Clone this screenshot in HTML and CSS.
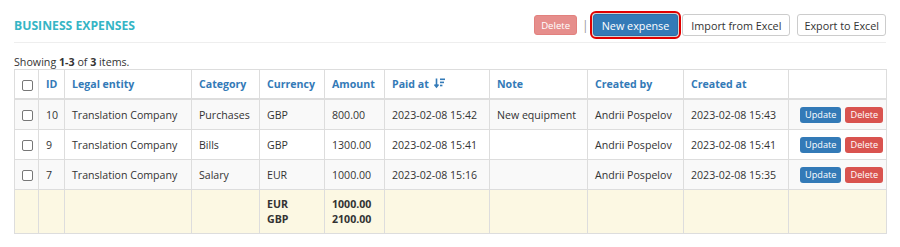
FILE: index.html
```html
<!DOCTYPE html>
<html lang="en">
<head>
    <meta charset="UTF-8">
    <title>Business expenses</title>
    <link rel="stylesheet" href="styles.css">
</head>
<body>
    <div class="page">
        <div class="page-header">
            <h1 class="page-title">BUSINESS EXPENSES</h1>
            <div class="toolbar">
                <button class="btn btn-danger btn-disabled">Delete</button>
                <span class="sep">|</span>
                <button class="btn btn-primary btn-highlight">New expense</button>
                <button class="btn btn-default btn-wide">Import from Excel</button>
                <button class="btn btn-default btn-last">Export to Excel</button>
            </div>
        </div>

        <div class="summary">Showing <b>1-3</b> of <b>3</b> items.</div>

        <table class="grid">
            <colgroup>
                <col class="col-check">
                <col class="col-id">
                <col class="col-entity">
                <col class="col-cat">
                <col class="col-cur">
                <col class="col-amount">
                <col class="col-paid">
                <col class="col-note">
                <col class="col-by">
                <col class="col-at">
                <col class="col-actions">
            </colgroup>
            <thead>
                <tr>
                    <th><span class="checkbox"></span></th>
                    <th><a>ID</a></th>
                    <th><a>Legal entity</a></th>
                    <th><a>Category</a></th>
                    <th><a>Currency</a></th>
                    <th><a>Amount</a></th>
                    <th><a>Paid at
                        <svg class="sort-icon" width="11" height="11" viewBox="0 0 11 11">
                            <path d="M2.5 0.5v8M0.5 6.5l2 2.5 2-2.5" stroke="#337ab7" stroke-width="1.6" fill="none"/>
                            <rect x="6" y="0.5" width="5" height="1.6" fill="#337ab7"/>
                            <rect x="6" y="3.6" width="4" height="1.6" fill="#337ab7"/>
                            <rect x="6" y="6.7" width="2.4" height="1.6" fill="#337ab7"/>
                        </svg></a></th>
                    <th><a>Note</a></th>
                    <th><a>Created by</a></th>
                    <th><a>Created at</a></th>
                    <th></th>
                </tr>
            </thead>
            <tbody>
                <tr>
                    <td><span class="checkbox"></span></td>
                    <td>10</td>
                    <td>Translation Company</td>
                    <td>Purchases</td>
                    <td>GBP</td>
                    <td>800.00</td>
                    <td>2023-02-08 15:42</td>
                    <td>New equipment</td>
                    <td>Andrii Pospelov</td>
                    <td>2023-02-08 15:43</td>
                    <td class="actions"><button class="btn-xs btn-primary">Update</button><button class="btn-xs btn-danger">Delete</button></td>
                </tr>
                <tr>
                    <td><span class="checkbox"></span></td>
                    <td>9</td>
                    <td>Translation Company</td>
                    <td>Bills</td>
                    <td>GBP</td>
                    <td>1300.00</td>
                    <td>2023-02-08 15:41</td>
                    <td></td>
                    <td>Andrii Pospelov</td>
                    <td>2023-02-08 15:41</td>
                    <td class="actions"><button class="btn-xs btn-primary">Update</button><button class="btn-xs btn-danger">Delete</button></td>
                </tr>
                <tr>
                    <td><span class="checkbox"></span></td>
                    <td>7</td>
                    <td>Translation Company</td>
                    <td>Salary</td>
                    <td>EUR</td>
                    <td>1000.00</td>
                    <td>2023-02-08 15:16</td>
                    <td></td>
                    <td>Andrii Pospelov</td>
                    <td>2023-02-08 15:35</td>
                    <td class="actions"><button class="btn-xs btn-primary">Update</button><button class="btn-xs btn-danger">Delete</button></td>
                </tr>
            </tbody>
            <tfoot>
                <tr>
                    <td></td>
                    <td></td>
                    <td></td>
                    <td></td>
                    <td><b>EUR<br>GBP</b></td>
                    <td><b>1000.00<br>2100.00</b></td>
                    <td></td>
                    <td></td>
                    <td></td>
                    <td></td>
                    <td></td>
                </tr>
            </tfoot>
        </table>
    </div>
</body>
</html>
```

FILE: styles.css
```css
/* Global */
body {
    margin: 0;
    font-family: 'Open Sans', sans-serif;
    font-size: 10.6px;
    color: #333;
    background: #fff;
}
.page {
    padding: 0 14px;
}

/* Header */
.page-header {
    display: flex;
    justify-content: space-between;
    align-items: center;
    height: 43px;
    border-bottom: 1px solid #eee;
    box-sizing: border-box;
    padding-top: 8px;
}
.page-title {
    margin: 0;
    font-size: 12.2px;
    font-weight: 700;
    color: #35b5c5;
}
.toolbar {
    display: flex;
    align-items: center;
    gap: 4px;
}
.sep {
    color: #999;
    margin: 0 0 0 1px;
    font-size: 12px;
}

/* Buttons */
.btn {
    font-family: 'Open Sans', sans-serif;
    font-size: 10.8px;
    border-radius: 3px;
    border: 1px solid transparent;
    line-height: 15px;
    height: 22px;
    padding: 2px 6px;
    white-space: nowrap;
    cursor: pointer;
}
.btn-default {
    background: #fff;
    border-color: #ccc;
    color: #333;
}
.btn-wide {
    padding: 2px 8px;
}
.btn-last {
    margin-left: 3px;
}
.btn-primary {
    background: #337ab7;
    border-color: #2e6da4;
    color: #fff;
}
.btn-danger {
    background: #d9534f;
    border-color: #d43f3a;
    color: #fff;
}
.btn-disabled {
    opacity: 0.65;
    height: 20px;
    font-size: 9.6px;
    padding: 1px 6px;
}
.btn-highlight {
    padding: 2px 8px;
    outline: 2px solid #e00000;
    outline-offset: 1px;
    box-shadow: 0 0 3px rgba(0, 0, 0, 0.5);
}
.btn-xs {
    font-family: 'Open Sans', sans-serif;
    font-size: 9.2px;
    line-height: 13px;
    height: 16px;
    padding: 0 4px;
    border: 1px solid transparent;
    border-radius: 3px;
    color: #fff;
    margin-left: 4px;
}

/* Summary */
.summary {
    margin-top: 12px;
    font-size: 10.7px;
    line-height: 14px;
}

/* Table */
.grid {
    width: 100%;
    table-layout: fixed;
    border-collapse: collapse;
}
.grid th, .grid td {
    border: 1px solid #ddd;
    padding: 0 7px;
    text-align: left;
    vertical-align: middle;
    height: 29px;
    white-space: nowrap;
    overflow: hidden;
}
.grid thead th {
    border-bottom: 2px solid #ddd;
    font-weight: 700;
    height: 28px;
}
.grid th a {
    color: #337ab7;
}
.grid tbody tr:nth-child(odd) {
    background: #f9f9f9;
}
.grid tfoot td {
    background: #fcf8e3;
    height: 43px;
    line-height: 15px;
}
.sort-icon {
    vertical-align: -1px;
    margin-left: 2px;
}
.checkbox {
    display: inline-block;
    width: 9px;
    height: 9px;
    border: 1px solid #777;
    border-radius: 2px;
    background: #fff;
    vertical-align: middle;
}
.col-check { width: 24px; }
.col-id { width: 26px; }
.col-entity { width: 127px; }
.col-cat { width: 68px; }
.col-cur { width: 65px; }
.col-amount { width: 60px; }
.col-paid { width: 105px; }
.col-note { width: 98px; }
.col-by { width: 96px; }
.col-at { width: 105px; }
.col-actions { width: 98px; }
.grid td.actions {
    text-align: right;
    padding-right: 5px;
}
```
